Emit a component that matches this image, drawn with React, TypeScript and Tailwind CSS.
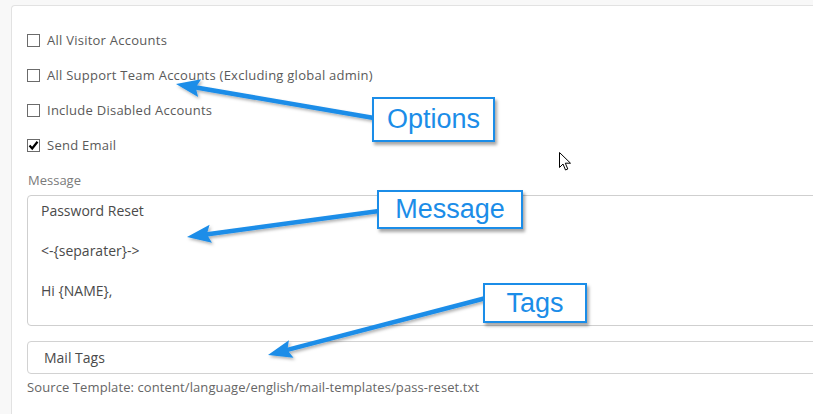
const BLUE = "#1b8de8";

interface IArrowProps {
  from: [number, number];
  to: [number, number];
}

const Arrow = ({ from, to }: IArrowProps) => {
  const [tx, ty] = from;
  const [hx, hy] = to;
  const len = Math.hypot(hx - tx, hy - ty);
  const dx = (hx - tx) / len;
  const dy = (hy - ty) / len;
  const L = 24;
  const W = 9;
  const bx = hx - dx * L;
  const by = hy - dy * L;
  const pts = [
    `${hx},${hy}`,
    `${bx - dy * W},${by + dx * W}`,
    `${bx + dx * 4},${by + dy * 4}`,
    `${bx + dy * W},${by - dx * W}`,
  ].join(" ");

  return (
    <g filter="url(#shadow)">
      <line x1={tx} y1={ty} x2={bx + dx * 5} y2={by + dy * 5} stroke={BLUE} strokeWidth={4.5} />
      <polygon points={pts} fill={BLUE} />
    </g>
  );
};

const Check = ({ checked, label }: { checked?: boolean; label: string }) => (
  <div className="h-[35px] flex items-center">
    <span className="w-[13px] h-[13px] border border-[#6b6b6b] bg-white flex items-center justify-center">
      {checked && (
        <svg width="11" height="11" viewBox="0 0 11 11">
          <path d="M1.5 5.5 L4.2 8.5 L9.5 1.8" fill="none" stroke="#000" strokeWidth="2.2" />
        </svg>
      )}
    </span>
    <span className="ml-[7px] text-[13px] text-[#5a5a5a] tracking-[0.25px]">{label}</span>
  </div>
);

const Callout = ({ text, className }: { text: string; className: string }) => (
  <div
    className={`absolute bg-white border-2 border-[#1b8de8] text-[#1b8de8] text-[27px] leading-none flex items-center justify-center shadow-[2px_3px_3px_rgba(0,0,0,0.35)] ${className}`}
    style={{ fontFamily: '"Liberation Sans", Arial, sans-serif' }}
  >
    {text}
  </div>
);

const App = () => {
  return (
    <div
      className="relative w-[813px] h-[414px] overflow-hidden bg-[#f8f8f8]"
      style={{ fontFamily: '"Open Sans", "Noto Sans", sans-serif' }}
    >
      <div className="ml-[11px] mt-[5px] w-[840px] h-[420px] bg-white border-l border-t border-[#e2e2e2] rounded-tl-[4px] pl-[15px] pt-[17px] pr-[20px]">
        <Check label="All Visitor Accounts" />
        <Check label="All Support Team Accounts (Excluding global admin)" />
        <Check label="Include Disabled Accounts" />
        <Check label="Send Email" checked />

        <div className="mt-[9px] text-[13px] leading-[16px] text-[#7a7a7a] pl-[1px]">Message</div>

        <div className="mt-[7px] h-[131px] border border-[#cfcfcf] rounded-[4px] pl-[13px] pt-[5px] text-[14px] leading-[20px] text-[#4a4a4a]">
          <div>Password Reset</div>
          <div>&nbsp;</div>
          <div>{"<-{separater}->"}</div>
          <div>&nbsp;</div>
          <div>Hi {"{NAME}"},</div>
        </div>

        <div className="mt-[15px] h-[33px] border border-[#d2d2d2] rounded-[4px] pl-[16px] flex items-center text-[14px] text-[#4a4a4a]">
          Mail Tags
        </div>

        <div className="mt-[5px] text-[13px] leading-[16px] text-[#666] tracking-[0.1px]">
          Source Template: content/language/english/mail-templates/pass-reset.txt
        </div>
      </div>

      <svg className="absolute inset-0 pointer-events-none" width="813" height="414">
        <defs>
          <filter id="shadow" x="-20%" y="-50%" width="140%" height="200%">
            <feDropShadow dx="1.5" dy="2" stdDeviation="1.5" floodColor="#000" floodOpacity="0.3" />
          </filter>
        </defs>
        <Arrow from={[374, 118]} to={[176, 84]} />
        <Arrow from={[379, 211]} to={[187, 237]} />
        <Arrow from={[486, 298]} to={[268, 355]} />
      </svg>

      <Callout text="Options" className="left-[372px] top-[97px] w-[123px] h-[45px]" />
      <Callout text="Message" className="left-[377px] top-[190px] w-[146px] h-[39px]" />
      <Callout text="Tags" className="left-[483px] top-[283px] w-[104px] h-[40px]" />

      <svg className="absolute left-[559px] top-[152px]" width="13" height="20" viewBox="0 0 13 20">
        <path d="M0.5 0.5 L0.5 15.5 L4 12 L6.5 18 L8.8 17 L6.3 11.2 L11.5 11.2 Z" fill="#fff" stroke="#000" strokeWidth="1" />
      </svg>
    </div>
  );
};

export default App;
